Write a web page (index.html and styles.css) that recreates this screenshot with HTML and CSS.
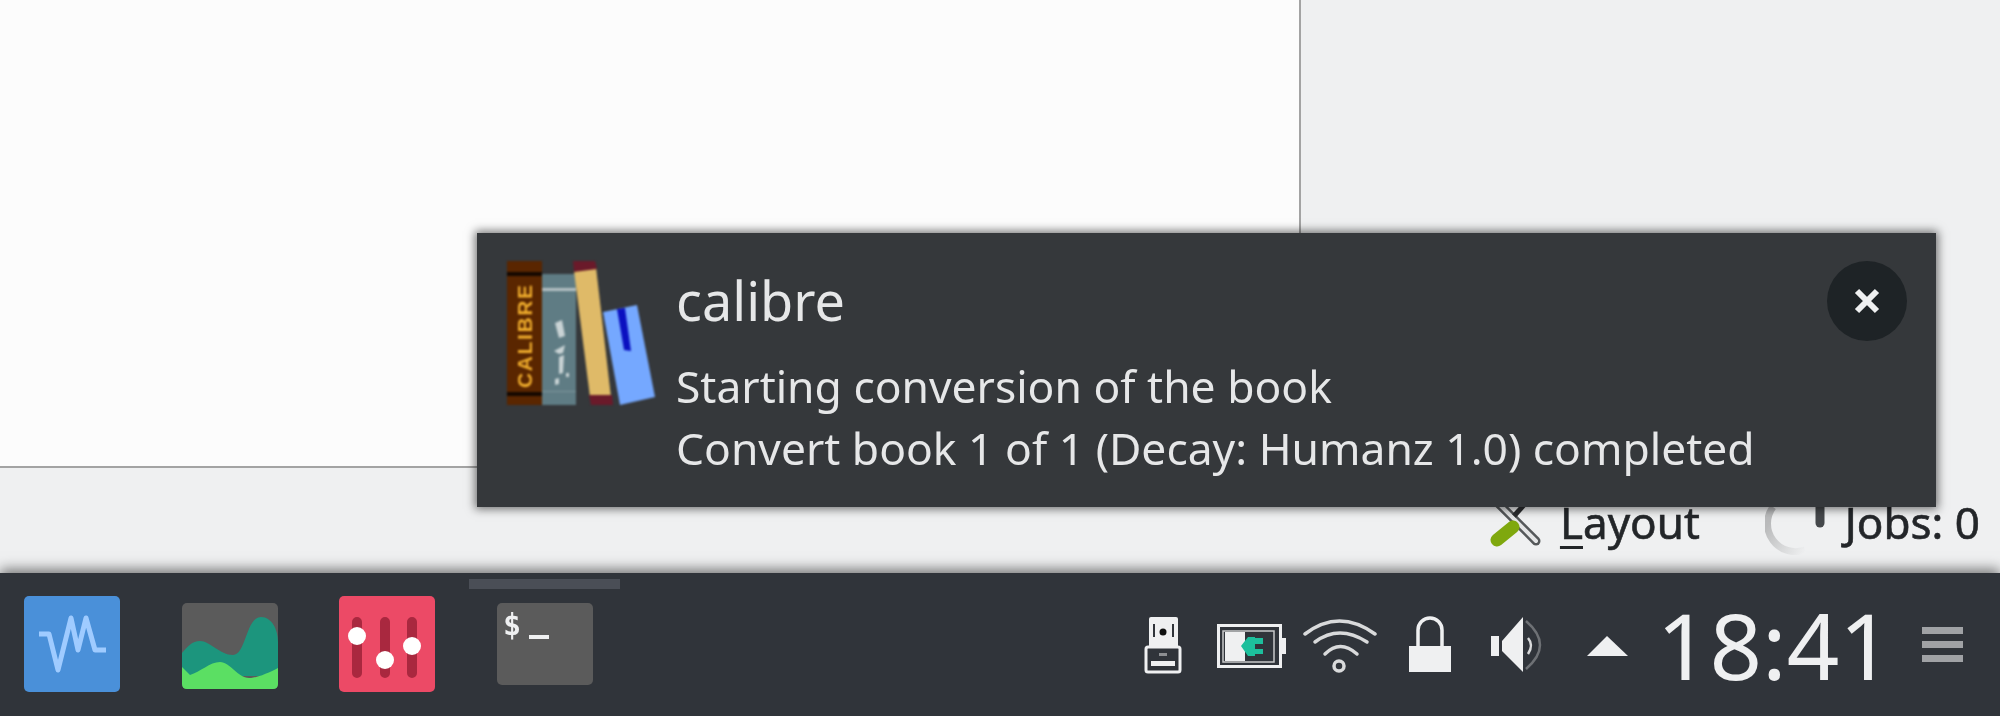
FILE: index.html
```html
<!DOCTYPE html>
<html lang="en">
<head>
  <meta charset="UTF-8" />
  <title>calibre notification</title>
  <link rel="stylesheet" href="styles.css">
</head>
<body>

  <div class="window">
    <div class="pane"></div>
    <div class="statusbar">
      <svg class="soft tools" viewBox="0 0 56 53">
        <path d="M6 5 L48 47" stroke="#55585a" stroke-width="9" stroke-linecap="round"/>
        <path d="M6 5 L48 47" stroke="#e4e5e6" stroke-width="4" stroke-linecap="round"/>
        <path d="M44 2 L26 22" stroke="#2b2d2f" stroke-width="5"/>
        <path d="M25 33 L9 46" stroke="#7fa80e" stroke-width="13" stroke-linecap="round"/>
      </svg>
      <span class="status-label"><u>L</u>ayout</span>
      <svg class="soft spinner" viewBox="0 0 64 64">
        <defs>
          <linearGradient id="fade" x1="0" y1="0" x2="1" y2="1">
            <stop offset="0.2" stop-color="#b9babb"/>
            <stop offset="1" stop-color="#eff0f1"/>
          </linearGradient>
        </defs>
        <path d="M8 16 A28 28 0 0 0 40 59" fill="none" stroke="url(#fade)" stroke-width="7"/>
        <path d="M55 14 V32" stroke="#45484b" stroke-width="9" stroke-linecap="round"/>
      </svg>
      <span class="status-label">Jobs: 0</span>
    </div>
  </div>

  <div class="popup">
    <svg class="popup-icon" viewBox="0 0 148 144">
      <rect width="35" height="144" fill="#5a2600"/>
      <rect y="11" width="35" height="4" fill="#140800"/>
      <rect y="131" width="35" height="4" fill="#140800"/>
      <text class="spine" transform="translate(25 127) rotate(-90)" textLength="103">CALIBRE</text>
      <rect x="35" y="13" width="34" height="131" fill="#5f7c84"/>
      <rect x="35" y="27" width="34" height="3" fill="#b4c1c4"/>
      <rect x="35" y="130" width="34" height="1" fill="#7e969c"/>
      <path d="M48 62 l7 -3 l3 16 l-6 2z M47 90 l11 -6 l-2 8 l-4 1z M52 96 l5 -2 l-1 18 l-4 1z M48 118 l4 -1 v6 l-4 1z M59 112 l3 0 v4 h-3z" fill="#c9d3d5"/>
      <path d="M67 10 L89 6 L104 136 L83 136z" fill="#dfba68"/>
      <path d="M66 0 L88 0 L90 8 L67 11z M82 134 L105 134 L106 144 L84 144z" fill="#6a1a2a"/>
      <path d="M96 51 L130 44 L148 136 L113 144z" fill="#75a8ff"/>
      <path d="M110 48 L118 47 L124 90 L117 89z" fill="#0a10c0"/>
    </svg>
    <div class="popup-text">
      <div class="popup-title">calibre</div>
      <div class="popup-body">Starting conversion of the book</div>
      <div class="popup-body">Convert book 1 of 1 (Decay: Humanz 1.0) completed</div>
    </div>
    <div class="popup-close">
      <svg viewBox="0 0 28 28"><path d="M4 4 L24 24 M24 4 L4 24" stroke="#eff0f1" stroke-width="6"/></svg>
    </div>
  </div>

  <div class="panel">
    <div class="tasks">
      <div class="task">
        <svg class="soft" viewBox="0 0 96 96">
          <rect width="96" height="96" rx="5" fill="#4a90d9"/>
          <path d="M15 38 H25 L34 74 L47 22 L54 54 L62 22 L71 54 H82" fill="none" stroke="#9fcbff" stroke-width="5" stroke-linejoin="round"/>
        </svg>
      </div>
      <div class="task">
        <svg class="soft" viewBox="0 0 96 96">
          <rect y="7" width="96" height="86" rx="5" fill="#5b5b5b"/>
          <path d="M0 57 C6 50 10 45 18 45 C28 45 38 59 51 59 C64 59 64 21 79 21 C90 21 96 34 96 46 V80 H0z" fill="#1c957d"/>
          <path d="M0 71 L8 79 C18 76 28 66 38 66 C48 66 56 82 67 82 C76 82 88 76 96 72 V88 Q96 93 91 93 H5 Q0 93 0 88z" fill="#5bdf63"/>
        </svg>
      </div>
      <div class="task">
        <svg class="soft" viewBox="0 0 96 96">
          <rect width="96" height="96" rx="5" fill="#ec4a66"/>
          <path d="M18 26 V77 M46 26 V77 M73 26 V77" stroke="#a9283f" stroke-width="10" stroke-linecap="round"/>
          <circle cx="18" cy="40" r="9" fill="#fff"/>
          <circle cx="46" cy="64" r="9" fill="#fff"/>
          <circle cx="73" cy="50" r="9" fill="#fff"/>
        </svg>
      </div>
      <div class="task task-active">
        <svg class="soft" viewBox="0 0 96 96">
          <rect y="7" width="96" height="82" rx="5" fill="#5b5b5b"/>
          <text class="prompt" x="6" y="39">$</text>
          <rect x="32" y="39" width="20" height="4" fill="#eff0f1"/>
        </svg>
      </div>
    </div>

    <div class="tray">
      <svg class="soft" viewBox="0 0 72 56">
        <rect x="23" y="0" width="29" height="32" rx="2" fill="#eff0f1"/>
        <path d="M28 7 V20 M47 7 V20" stroke="#30343a" stroke-width="2"/>
        <circle cx="37" cy="15" r="3.5" fill="#111"/>
        <rect x="20" y="30" width="34" height="25" rx="2" fill="#30343a" stroke="#eff0f1" stroke-width="3"/>
        <rect x="33" y="36" width="8" height="3" fill="#8d8f92"/>
        <rect x="25" y="44" width="24" height="5" fill="#eff0f1"/>
      </svg>
      <svg class="soft" viewBox="0 0 72 56">
        <rect x="3.5" y="8.5" width="62" height="41" fill="none" stroke="#eff0f1" stroke-width="3"/>
        <rect x="8" y="14" width="51" height="31" fill="none" stroke="#c8c9ca" stroke-width="1.5"/>
        <rect x="66" y="21" width="5" height="16" fill="#eff0f1"/>
        <rect x="10" y="15" width="20" height="29" fill="#eff0f1"/>
        <path d="M26 29 L33 20 H40 V21 H48 V27 H40 V32 H48 V37 H40 V39 H33z" fill="#1dbf9c"/>
      </svg>
      <svg class="soft" viewBox="0 0 72 56">
        <g fill="none" stroke="#d9dadb" stroke-width="3.5" stroke-linecap="round">
          <path d="M1 17 Q35 -9 71 17"/>
          <path d="M11 25 Q35 7 63 25"/>
          <path d="M21 37 Q36 22 53 37"/>
          <circle cx="35" cy="49" r="5"/>
        </g>
      </svg>
      <svg class="soft" viewBox="0 0 72 56">
        <path d="M25 30 V13 A12 12 0 0 1 49 13 V30" fill="none" stroke="#eff0f1" stroke-width="3.5"/>
        <rect x="16" y="29" width="42" height="26" fill="#eff0f1"/>
      </svg>
      <svg class="soft" viewBox="0 0 72 56">
        <rect x="9" y="19" width="8" height="20" fill="#eff0f1"/>
        <path d="M20 24 L41 0 V55 L20 34z" fill="#eff0f1"/>
        <path d="M46 21 Q52 28 46 37" fill="none" stroke="#d9dadb" stroke-width="2.5"/>
        <path d="M44 4 Q72 28 44 52" fill="none" stroke="#6e7175" stroke-width="2.5"/>
      </svg>
      <svg class="soft" viewBox="0 0 72 56">
        <path d="M16 39 L36 19 L57 39z" fill="#eff0f1"/>
      </svg>
    </div>

    <div class="clock">18:41</div>

    <div class="panel-menu">
      <span></span><span></span><span></span>
    </div>
  </div>

</body>
</html>
```

FILE: styles.css
```css
:root {
  --light: #eff0f1;
  --panel: #30343a;
  --popup: #35383b;
}

body {
  margin: 0;
  height: 716px;
  overflow: hidden;
  display: flex;
  flex-direction: column;
  font-family: "Noto Sans", sans-serif;
  background: var(--light);
  color: #232629;
}

.soft {
  filter: blur(0.6px);
}

/* Fenster dahinter */
.window {
  height: 573px;
  display: flex;
  flex-direction: column;
}

.pane {
  width: 1299px;
  height: 466px;
  background: #fcfcfc;
  border-right: 2px solid #a3a3a3;
  border-bottom: 2px solid #a3a3a3;
}

.statusbar {
  flex: 1;
  display: flex;
  align-items: center;
  justify-content: flex-end;
  padding-right: 20px;
}

.tools {
  width: 56px;
  height: 53px;
  margin-right: 16px;
}

.status-label {
  font-size: 44px;
  line-height: 60px;
  margin-top: 2px;
  white-space: nowrap;
  -webkit-text-stroke: 0.6px #232629;
  filter: blur(0.4px);
}

.status-label u {
  text-underline-offset: 7px;
  text-decoration-thickness: 3px;
}

.spinner {
  width: 64px;
  height: 64px;
  margin: 4px 16px 0 65px;
}

/* Benachrichtigung */
.popup {
  position: absolute;
  left: 477px;
  top: 233px;
  width: 1459px;
  height: 274px;
  box-sizing: border-box;
  padding: 28px 29px 0 30px;
  display: flex;
  gap: 21px;
  background: var(--popup);
  color: #e6e7e8;
  box-shadow: 0 0 9px 2px rgba(0, 0, 0, 0.55);
}

.popup-icon {
  width: 148px;
  height: 144px;
  flex: none;
  filter: blur(0.9px);
}

.spine {
  font-family: "Liberation Sans", sans-serif;
  font-weight: 700;
  font-size: 21px;
  fill: #f0ad2c;
}

.popup-text {
  flex: 1;
  padding-top: 3px;
  filter: blur(0.4px);
}

.popup-title {
  font-size: 54px;
  line-height: 72px;
  margin-bottom: 19px;
}

.popup-body {
  font-size: 44.4px;
  line-height: 62px;
}

.popup-close {
  width: 80px;
  height: 80px;
  border-radius: 50%;
  background: #1e2326;
  display: flex;
  align-items: center;
  justify-content: center;
}

.popup-close svg {
  width: 28px;
  height: 28px;
}

/* Taskleiste */
.panel {
  position: relative;
  height: 143px;
  display: flex;
  align-items: center;
  background: var(--panel);
  color: var(--light);
  box-shadow: 0 -4px 12px rgba(0, 0, 0, 0.5);
}

.tasks {
  display: flex;
  gap: 61.7px;
  padding-left: 24px;
  align-self: flex-start;
  padding-top: 23px;
}

.task {
  position: relative;
  width: 96px;
  height: 96px;
}

.task svg {
  display: block;
  width: 96px;
  height: 96px;
}

.task-active::before {
  content: '';
  position: absolute;
  left: -28px;
  top: -17px;
  width: 151px;
  height: 10px;
  background: #4a4e56;
}

.prompt {
  font-family: "DejaVu Sans Mono", monospace;
  font-weight: 700;
  font-size: 30px;
  fill: var(--light);
}

.tray {
  margin-left: auto;
  display: flex;
  gap: 17px;
}

.tray svg {
  width: 72px;
  height: 56px;
  overflow: visible;
}

.clock {
  font-size: 92px;
  line-height: 100px;
  margin: 0 30px 0 14px;
  filter: blur(0.4px);
}

.panel-menu {
  width: 41px;
  margin-right: 37px;
  display: flex;
  flex-direction: column;
  gap: 7px;
}

.panel-menu span {
  height: 7px;
  background: #a0a2a5;
}
```
